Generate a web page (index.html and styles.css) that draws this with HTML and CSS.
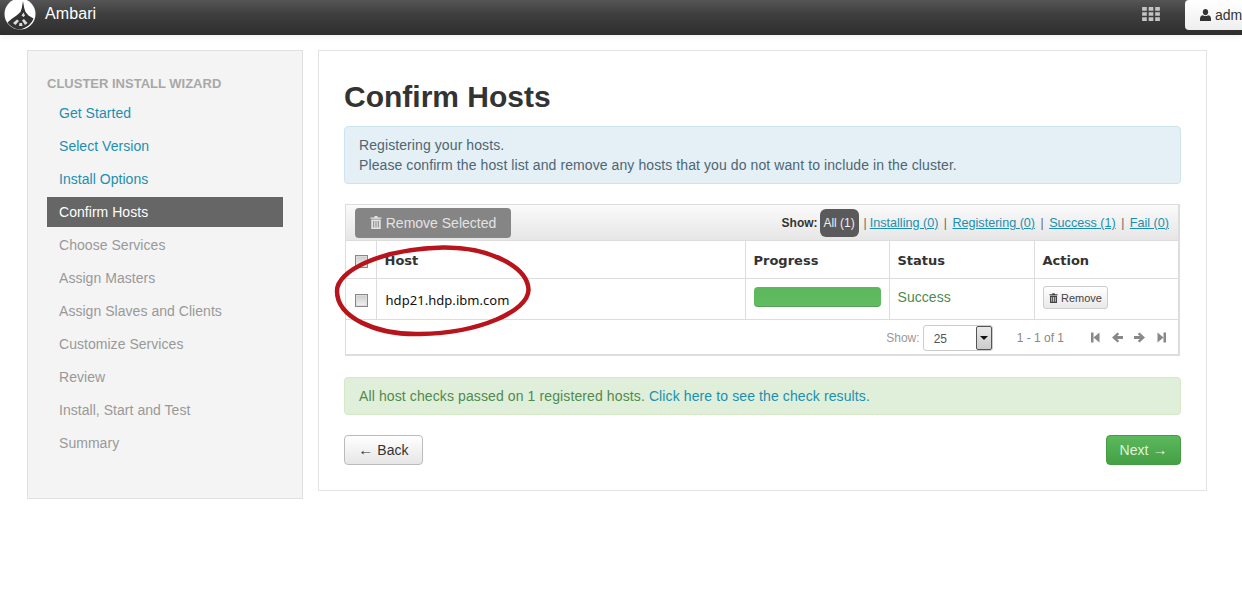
FILE: index.html
```html
<!DOCTYPE html>
<html lang="en">
<head>
<meta charset="utf-8">
<title>Ambari - Confirm Hosts</title>
<link rel="stylesheet" href="styles.css">
</head>
<body>
<header class="navbar">
  <svg class="logo" viewBox="0 0 32 32" aria-hidden="true">
    <circle cx="16" cy="16" r="15.500" fill="#fff"/>
    <path d="M19 3 L20.200 10 L21.500 14 L24.500 17.500 L29.500 20.500 C28 25 23 30 16 31.500 C10 31 6 28 3.500 24.500 L7.500 21 L12.500 17.500 L16.500 14 L17.800 10 Z" fill="#333"/>
    <path d="M9 25 L13 21.500 L15 23 L11.500 27 Z M23.500 25 L20 21 L18 22.500 L21 27 Z M15.500 25 L18 25 L18.500 28 L15 28 Z M17.500 17.500 L19.500 14.500 L21 17.500 L19.500 19 Z" fill="#ddd"/>
  </svg>
  <span class="brand">Ambari</span>
  <svg class="apps" viewBox="0 0 19 15" aria-hidden="true">
    <path d="M0 0h5v4H0zM7 0h5v4H7zM14 0h5v4h-5zM0 5.500h5v4H0zM7 5.500h5v4H7zM14 5.500h5v4h-5zM0 11h5v4H0zM7 11h5v4H7zM14 11h5v4h-5z" fill="#c4c4c4"/>
  </svg>
  <div class="user-btn">
    <svg class="user-icon" viewBox="0 0 11 12" aria-hidden="true">
      <path d="M5.500 0C7 0 8.200 1.300 8.200 3S7 6.200 5.500 6.200 2.800 4.700 2.800 3 4 0 5.500 0ZM3 6.200C3.700 6.800 4.500 7.100 5.500 7.100S7.300 6.800 8 6.200C9.800 6.400 11 7.500 11 9.800V12H0V9.800C0 7.500 1.200 6.400 3 6.200Z" fill="#333"/>
    </svg>
    <span>admin</span>
  </div>
</header>

<div class="page">
  <aside class="sidebar">
    <h2 class="side-title">CLUSTER INSTALL WIZARD</h2>
    <ul class="steps">
      <li class="step done">Get Started</li>
      <li class="step done">Select Version</li>
      <li class="step done">Install Options</li>
      <li class="step active">Confirm Hosts</li>
      <li class="step">Choose Services</li>
      <li class="step">Assign Masters</li>
      <li class="step">Assign Slaves and Clients</li>
      <li class="step">Customize Services</li>
      <li class="step">Review</li>
      <li class="step">Install, Start and Test</li>
      <li class="step">Summary</li>
    </ul>
  </aside>

  <main class="content">
    <h1 class="title">Confirm Hosts</h1>
    <div class="alert info">
      <div>Registering your hosts.</div>
      <div>Please confirm the host list and remove any hosts that you do not want to include in the cluster.</div>
    </div>

    <section class="hosts">
      <div class="toolbar">
        <div class="remove-selected">
          <svg class="trash" viewBox="0 0 12 13" aria-hidden="true"><path d="M4 1.500 4.800 0h2.400L8 1.500h3.500v1.200H.5V1.500ZM1.300 3.500h9.400V13H1.300ZM3.200 5v6.500h1V5Zm2.300 0v6.500h1V5Zm2.300 0v6.500h1V5Z" fill="currentColor" fill-rule="evenodd"/></svg>
          Remove Selected
        </div>
        <div class="filters">
          <b class="filter-label">Show:</b>
          <span class="pill">All (1)</span>
          <span class="sep first">|</span><a class="filter">Installing (0)</a>
          <span class="sep">|</span><a class="filter">Registering (0)</a>
          <span class="sep">|</span><a class="filter">Success (1)</a>
          <span class="sep">|</span><a class="filter">Fail (0)</a>
        </div>
      </div>
      <table class="grid">
        <thead>
          <tr>
            <th class="c-check"><span class="check"></span></th>
            <th class="c-host">Host</th>
            <th class="c-progress">Progress</th>
            <th class="c-status">Status</th>
            <th class="c-action">Action</th>
          </tr>
        </thead>
        <tbody>
          <tr>
            <td class="c-check"><span class="check"></span></td>
            <td class="host-name">hdp21.hdp.ibm.com</td>
            <td><div class="bar"></div></td>
            <td class="ok">Success</td>
            <td class="c-remove"><span class="remove">
              <svg class="trash small" viewBox="0 0 12 13" aria-hidden="true"><path d="M4 1.500 4.800 0h2.400L8 1.500h3.500v1.200H.5V1.500ZM1.300 3.500h9.400V13H1.300ZM3.200 5v6.500h1V5Zm2.300 0v6.500h1V5Zm2.300 0v6.500h1V5Z" fill="currentColor" fill-rule="evenodd"/></svg>
              Remove</span></td>
          </tr>
        </tbody>
      </table>
      <div class="pager">
        <span class="pager-label">Show:</span>
        <div class="select"><span class="select-val">25</span><span class="select-btn"><i class="caret"></i></span></div>
        <span class="range">1 - 1 of 1</span>
        <div class="nav-icons">
          <svg viewBox="0 0 11 11" aria-hidden="true"><path d="M1 .5h2.500v10H1zM9.500 .5v10L3.500 5.500Z"/></svg>
          <svg viewBox="0 0 11 11" aria-hidden="true"><path d="M5.500 .5 7.200 2 5.200 4h5.800v3H5.200l2 2-1.700 1.500L0 5.500Z"/></svg>
          <svg viewBox="0 0 11 11" aria-hidden="true"><path d="M5.500 .5 3.800 2l2 2H0v3h5.800l-2 2 1.700 1.500L11 5.500Z"/></svg>
          <svg viewBox="0 0 11 11" aria-hidden="true"><path d="M10 .5H7.500v10H10ZM1.500 .5v10L7.500 5.500Z"/></svg>
        </div>
      </div>
      <svg class="ring" viewBox="330 240 210 100" aria-hidden="true">
        <path d="M443 248.500C490 248 528 268 528.500 291 C528 312 480 334 420 335 C375 336 337 318 337 292 C337 272 380 250 443 248.500Z" fill="none" stroke="#b8141c" stroke-width="4.500"/>
      </svg>
    </section>

    <div class="alert success">All host checks passed on 1 registered hosts. <a class="link">Click here to see the check results.</a></div>

    <div class="actions">
      <div class="btn back"><span class="arrow">←</span> Back</div>
      <div class="btn next">Next <span class="arrow">→</span></div>
    </div>
  </main>
</div>
</body>
</html>
```
FILE: styles.css
```css
* { box-sizing: border-box; }
html, body { margin: 0; padding: 0; }
body {
  width: 1242px;
  height: 606px;
  overflow: hidden;
  background: #fff;
  color: #333;
  font: 14px/20px "Liberation Sans", Arial, sans-serif;
}
.navbar {
  height: 35px;
  display: flex;
  align-items: center;
  background: linear-gradient(#555 0, #3f3f3f 40%, #2d2d2d 100%);
  box-shadow: 0 2px 6px rgba(0,0,0,.06);
  overflow: hidden;
  position: relative;
}
.logo { width: 32px; height: 32px; margin: -7px 0 0 4px; flex: none; }
.brand { color: #fff; font-size: 16px; letter-spacing: .1px; margin: -8px 0 0 9px; }
.apps { width: 18px; height: 14px; margin: -7px 0 0 auto; flex: none; }
.user-btn {
  width: 80px;
  height: 30px;
  margin: -5px -23px 0 25px;
  flex: none;
  display: flex;
  align-items: center;
  padding-left: 15px;
  gap: 4px;
  background: linear-gradient(#fff, #eee);
  border-radius: 4px;
  color: #333;
}
.user-icon { width: 11px; height: 12px; }

.page {
  display: flex;
  align-items: flex-start;
  gap: 15px;
  padding: 15px 0 0 27px;
}
.sidebar {
  width: 276px;
  height: 449px;
  flex: none;
  background: #f4f4f4;
  border: 1px solid #e0e0e0;
  padding: 23px 19px 0;
}
.side-title { margin: 0; font-size: 13px; line-height: 20px; font-weight: 700; color: #a8a8a8; }
.steps { list-style: none; margin: 4px 0 0; padding: 0; display: flex; flex-direction: column; gap: 3px; }
.step { height: 30px; line-height: 30px; padding-left: 12px; color: #999; letter-spacing: .04px; }
.step.done { color: #1c8fb0; }
.step.active { background: #666; color: #fff; }

.content {
  width: 889px;
  height: 441px;
  flex: none;
  border: 1px solid #e3e3e3;
  padding: 26px 25px 0;
  background: #fff;
}
.title { margin: 0 0 9px; font-size: 30px; line-height: 40px; color: #333; font-weight: 700; }
.alert { border-radius: 4px; padding: 8px 14px; letter-spacing: .09px; }
.alert.info { height: 58px; background: #e5f0f6; border: 1px solid #cfe3ec; color: #4d6673; }
.alert.success { height: 38px; margin-top: 21px; background: #dfefd9; border: 1px solid #d6e9c6; color: #4f8a50; letter-spacing: .11px; }
.link { color: #1c8fb0; }

.hosts {
  position: relative;
  margin: 20px 1px 0;
  height: 152px;
  border: 1px solid #ddd;
  border-bottom-width: 2px;
  border-right-width: 2px;
}
.toolbar {
  height: 36px;
  display: flex;
  align-items: center;
  justify-content: space-between;
  padding: 0 9px 0 9px;
  background: linear-gradient(#fafafa, #e6e6e6);
  border-bottom: 1px solid #ddd;
}
.remove-selected {
  width: 156px;
  height: 30px;
  display: flex;
  align-items: center;
  justify-content: center;
  gap: 4px;
  background: #858585;
  border-radius: 4px;
  color: #e3e3e3;
}
.trash { width: 12px; height: 13px; }
.filters { display: flex; align-items: center; font-size: 12px; }
.filter-label { color: #333; margin-right: 2px; }
.pill { background: #5a5a5a; color: #eee; width: 39px; height: 28px; line-height: 28px; border-radius: 6px; text-align: center; }
.sep { color: #666; margin: 0 5.500px; }
.sep.first { margin: 0 3px 0 5px; }
.filter { color: #1c8fb0; text-decoration: underline; font-size: 12.600px; }

.grid { width: 834px; border-collapse: collapse; table-layout: fixed; }
.grid th, .grid td { border: 1px solid #ddd; border-top: 0; padding: 0 8px; text-align: left; }
.grid th:first-child, .grid td:first-child { border-left: 0; }
.grid th:last-child, .grid td:last-child { border-right: 0; }
.grid thead tr { height: 37px; }
.grid tbody tr { height: 41px; }
.grid th { font: 700 13px/20px "DejaVu Sans", Verdana, sans-serif; color: #333; padding-top: 4px; }
.c-check { width: 30px; }
.c-host { width: 369px; }
.c-progress { width: 144px; }
.c-status { width: 145px; }
.grid .c-check { padding: 4px 0 0 9px; }
.check {
  display: block;
  width: 13px;
  height: 13px;
  background: linear-gradient(#ccc, #f2f2f2);
  border: 1px solid #888;
  box-shadow: inset 0 0 0 1px #ddd;
}
.grid .host-name { font: 13px/20px "Noto Sans", "Open Sans", sans-serif; letter-spacing: .05px; color: #111; padding: 2px 0 0 9px; }
.bar { height: 20px; margin-top: -4px; background: linear-gradient(#5cb85c, #62bb62); border-radius: 4px; box-shadow: inset 0 -1px 0 rgba(0,0,0,.15); }
.grid .ok { color: #4f8a50; padding-bottom: 4px; letter-spacing: .05px; }
.grid .c-remove { padding-bottom: 2px; }
.remove {
  display: inline-flex;
  align-items: center;
  gap: 3px;
  height: 23px;
  padding: 0 5.500px;
  font-size: 11px;
  color: #444;
  border: 1px solid #ccc;
  border-radius: 3px;
  background: linear-gradient(#fff, #e9e9e9);
}
.trash.small { width: 9px; height: 10px; }

.pager {
  height: 36px;
  display: flex;
  align-items: center;
  justify-content: flex-end;
  font-size: 12px;
  color: #999;
  padding-right: 11px;
}
.select {
  width: 70px;
  height: 26px;
  margin-left: 3px;
  display: flex;
  border: 1px solid #ccc;
  border-radius: 3px;
  background: #fff;
}
.select-val { flex: 1; padding-left: 10px; line-height: 26px; color: #555; }
.select-btn {
  width: 16px;
  display: flex;
  align-items: center;
  justify-content: center;
  background: linear-gradient(#e8e8e8, #ccc);
  border: 1px solid #555;
  border-radius: 2px;
}
.caret { width: 0; height: 0; border: 4px solid transparent; border-top: 4px solid #111; border-bottom: 0; }
.range { margin-left: 24px; color: #888; }
.nav-icons { display: flex; gap: 11px; margin-left: 26px; }
.nav-icons svg { width: 11px; height: 11px; fill: #888; }
.ring { position: absolute; left: -16px; top: 34px; width: 210px; height: 100px; overflow: visible; }

.actions { display: flex; justify-content: space-between; margin-top: 20px; }
.btn { height: 30px; line-height: 28px; text-align: center; border-radius: 4px; border: 1px solid; letter-spacing: .05px; }
.btn.back { width: 79px; color: #333; background: linear-gradient(#fff, #e6e6e6); border-color: #bbb; }
.btn.next { width: 75px; color: #dff3da; background: linear-gradient(#5cb85c, #45a045); border-color: #449d44; }
.arrow { font-size: 15px; line-height: 1; }
```
